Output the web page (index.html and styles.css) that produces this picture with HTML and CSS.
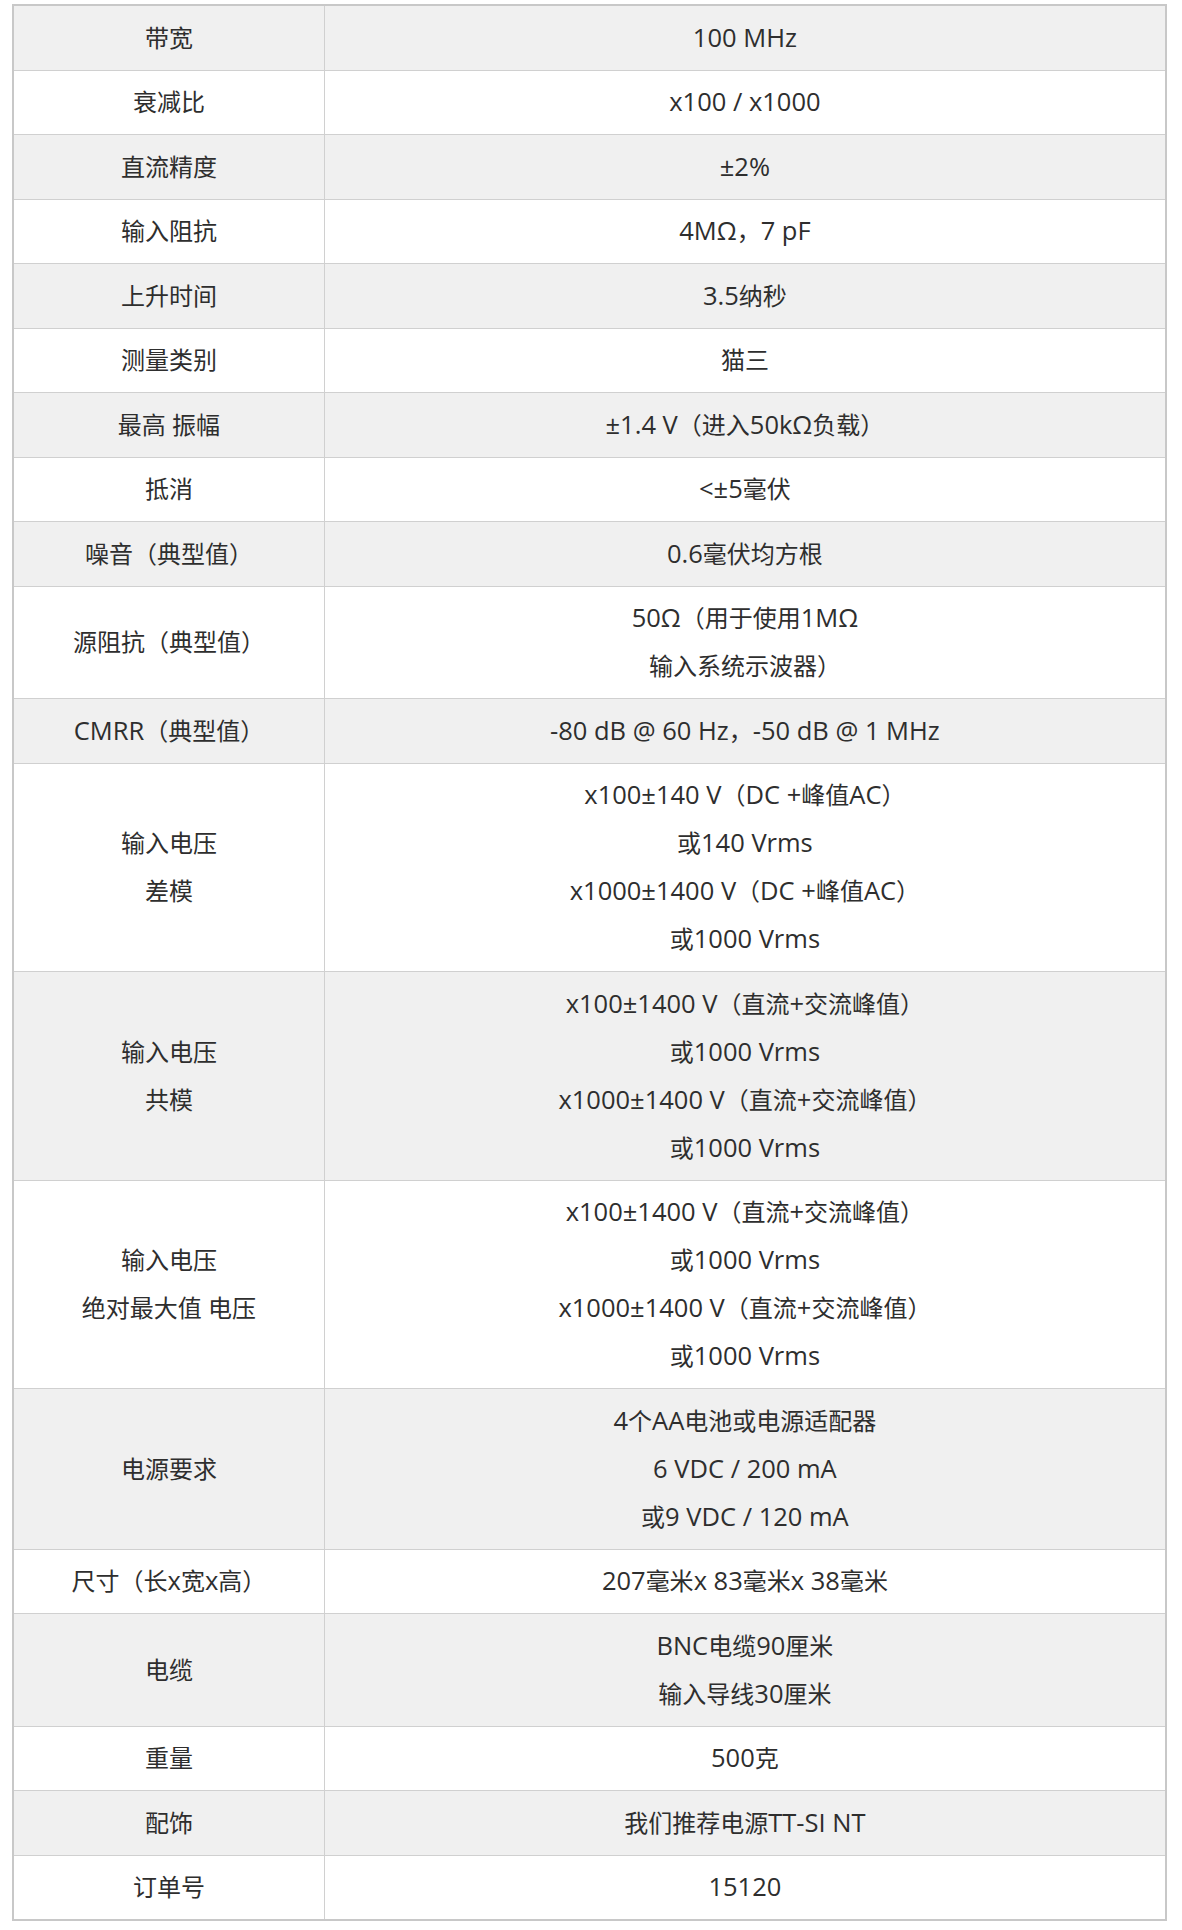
FILE: index.html
```html
<!DOCTYPE html>
<html lang="zh-CN">
<head>
<meta charset="utf-8">
<title>规格</title>
<link rel="stylesheet" href="styles.css">
</head>
<body>
<table class="spec">
  <tbody>
    <tr><td class="k">带宽</td><td class="v"><span class="l">100 MHz</span></td></tr>
    <tr><td class="k">衰减比</td><td class="v"><span class="l">x100 / x1000</span></td></tr>
    <tr><td class="k">直流精度</td><td class="v"><span class="l">±2%</span></td></tr>
    <tr><td class="k">输入阻抗</td><td class="v"><span class="l">4MΩ</span>，<span class="l">7 pF</span></td></tr>
    <tr><td class="k">上升时间</td><td class="v"><span class="l">3.5</span>纳秒</td></tr>
    <tr><td class="k">测量类别</td><td class="v">猫三</td></tr>
    <tr><td class="k">最高 振幅</td><td class="v"><span class="l">±1.4 V</span>（进入<span class="l">50kΩ</span>负载）</td></tr>
    <tr><td class="k">抵消</td><td class="v"><span class="l">&lt;±5</span>毫伏</td></tr>
    <tr><td class="k">噪音（典型值）</td><td class="v"><span class="l">0.6</span>毫伏均方根</td></tr>
    <tr><td class="k">源阻抗（典型值）</td><td class="v"><span class="l">50Ω</span>（用于使用<span class="l">1MΩ</span><br>输入系统示波器）</td></tr>
    <tr><td class="k"><span class="l">CMRR</span>（典型值）</td><td class="v"><span class="l">-80 dB @ 60 Hz</span>，<span class="l">-50 dB @ 1 MHz</span></td></tr>
    <tr><td class="k">输入电压<br>差模</td><td class="v"><span class="l">x100±140 V</span>（<span class="l">DC +</span>峰值<span class="l">AC</span>）<br>或<span class="l">140 Vrms</span><br><span class="l">x1000±1400 V</span>（<span class="l">DC +</span>峰值<span class="l">AC</span>）<br>或<span class="l">1000 Vrms</span></td></tr>
    <tr><td class="k">输入电压<br>共模</td><td class="v"><span class="l">x100±1400 V</span>（直流<span class="l">+</span>交流峰值）<br>或<span class="l">1000 Vrms</span><br><span class="l">x1000±1400 V</span>（直流<span class="l">+</span>交流峰值）<br>或<span class="l">1000 Vrms</span></td></tr>
    <tr><td class="k">输入电压<br>绝对最大值 电压</td><td class="v"><span class="l">x100±1400 V</span>（直流<span class="l">+</span>交流峰值）<br>或<span class="l">1000 Vrms</span><br><span class="l">x1000±1400 V</span>（直流<span class="l">+</span>交流峰值）<br>或<span class="l">1000 Vrms</span></td></tr>
    <tr><td class="k">电源要求</td><td class="v"><span class="l">4</span>个<span class="l">AA</span>电池或电源适配器<br><span class="l">6 VDC / 200 mA</span><br>或<span class="l">9 VDC / 120 mA</span></td></tr>
    <tr><td class="k">尺寸（长<span class="l">x</span>宽<span class="l">x</span>高）</td><td class="v"><span class="l">207</span>毫米<span class="l">x 83</span>毫米<span class="l">x 38</span>毫米</td></tr>
    <tr><td class="k">电缆</td><td class="v"><span class="l">BNC</span>电缆<span class="l">90</span>厘米<br>输入导线<span class="l">30</span>厘米</td></tr>
    <tr><td class="k">重量</td><td class="v"><span class="l">500</span>克</td></tr>
    <tr><td class="k">配饰</td><td class="v">我们推荐电源<span class="l">TT-SI NT</span></td></tr>
    <tr><td class="k">订单号</td><td class="v"><span class="l">15120</span></td></tr>
  </tbody>
</table>
</body>
</html>
```
FILE: styles.css
```css
html, body {
  background: #ffffff;
}
body {
  margin: 4px 15px 0 12px;
  font-family: "Open Sans", "Noto Sans CJK SC", sans-serif;
  font-size: 24px;
  color: #2e2e2e;
}
.spec {
  width: 100%;
  border-collapse: collapse;
  border: 2px solid #c8c8c8;
}
.spec td {
  border: 1px solid #d0d0d0;
  padding: 7.75px 10px;
  line-height: 48px;
  text-align: center;
  vertical-align: middle;
}
.spec .k {
  width: 27%;
}
.spec tr:nth-child(odd) td {
  background: #f0f0f0;
}
.l {
  font-size: 25.5px;
  line-height: 1;
}
```
